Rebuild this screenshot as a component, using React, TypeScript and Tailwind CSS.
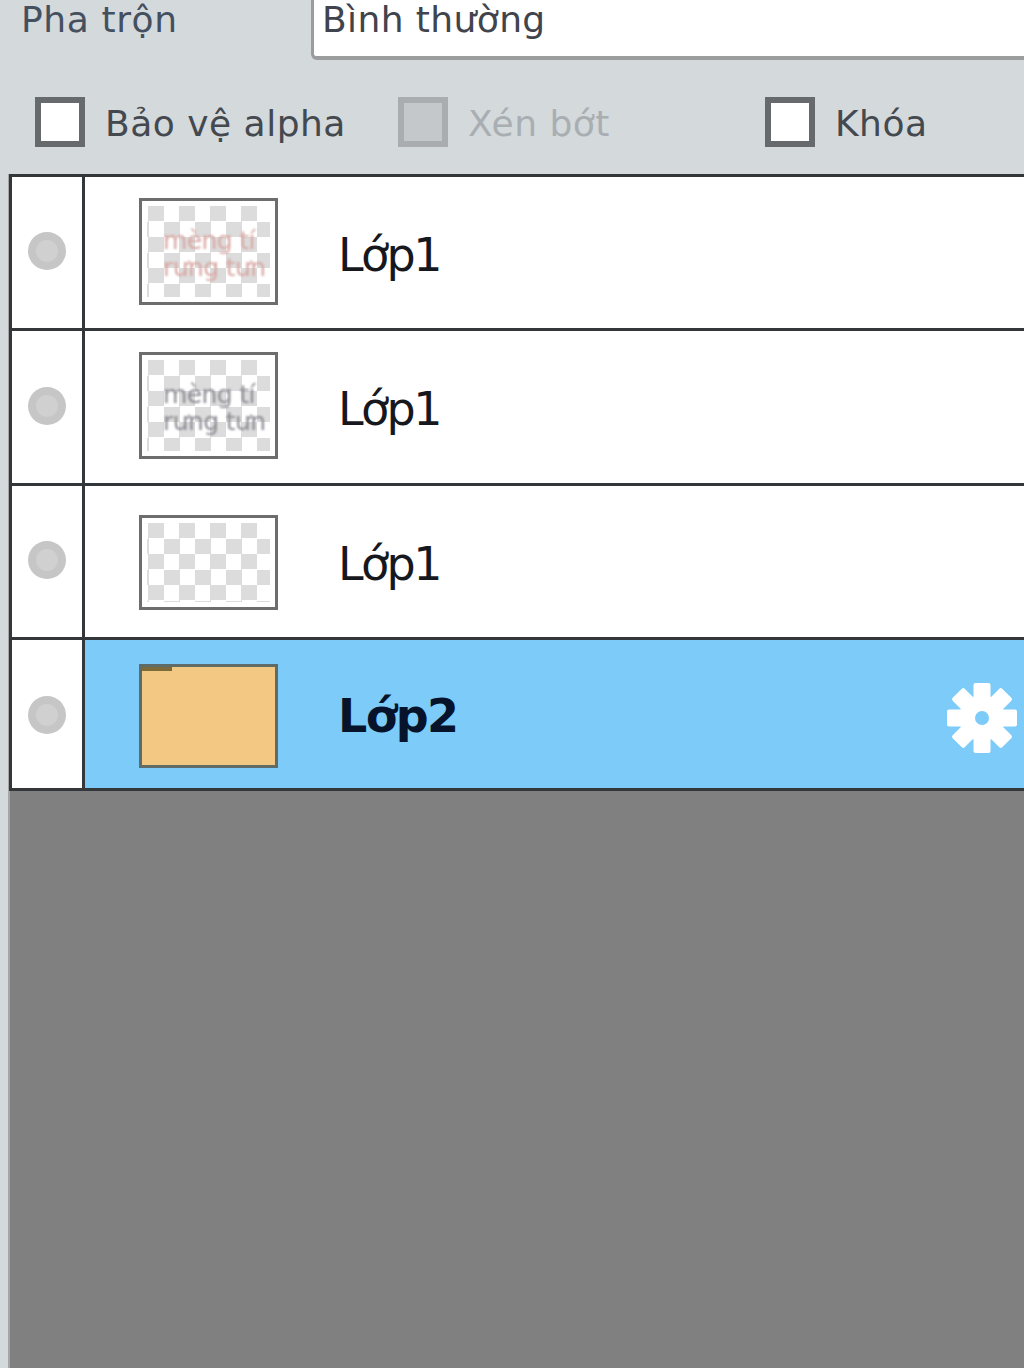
const FONT = "font-['DejaVu_Sans','Noto_Sans',sans-serif]";

const CHECKER =
  'bg-[conic-gradient(#dcdcdc_25%,#ffffff_0_50%,#dcdcdc_0_75%,#ffffff_0)] bg-[length:31px_31px] bg-[position:-14px_0px] blur-[0.5px]';

interface Layer {
  name: string;
  thumb: string;
  doodle?: string[];
  doodleColor?: string;
  active?: boolean;
  rowH: string;
}

const LAYERS: Layer[] = [
  { name: 'Lớp1', thumb: 'h-[107px] mb-[3px]', doodle: ['mèng tí', 'rưng tưn'], doodleColor: 'text-[#d8a8a4]', rowH: 'h-[154px]' },
  { name: 'Lớp1', thumb: 'h-[107px] mb-[3px]', doodle: ['mèng tí', 'rưng tưn'], doodleColor: 'text-[#8c8c94]', rowH: 'h-[155px]' },
  { name: 'Lớp1', thumb: 'h-[95px] mt-[2px]', rowH: 'h-[154px]' },
  { name: 'Lớp2', thumb: 'h-[104px] mt-[4px]', active: true, rowH: 'h-[151px]' },
];

function Checkbox({ label, disabled, box }: { label: string; disabled?: boolean; box: string }) {
  return (
    <div className={`flex items-center ${box}`}>
      <div
        className={`w-[50px] h-[50px] shrink-0 border-[6px] ${
          disabled ? 'border-[#a9adb0] bg-[#c4c8cb]' : 'border-[#666a6d] bg-white'
        }`}
      />
      <span
        className={`ml-[20px] mt-[3px] text-[36px] leading-none tracking-[0.5px] whitespace-nowrap ${
          disabled ? 'text-[#a9aeb2]' : 'text-[#44484f]'
        }`}
      >
        {label}
      </span>
    </div>
  );
}

function Gear() {
  const teeth = [0, 45, 90, 135];
  return (
    <svg width="72" height="72" viewBox="0 0 72 72" className="shrink-0">
      <g fill="#ffffff">
        {teeth.map((a) => (
          <rect key={a} x="27.5" y="1" width="17" height="70" rx="2" transform={`rotate(${a} 36 36)`} />
        ))}
        <circle cx="36" cy="36" r="23" />
      </g>
      <circle cx="36" cy="36" r="7" fill="#7ccbf9" />
    </svg>
  );
}

function LayerRow({ layer }: { layer: Layer }) {
  return (
    <div className={`flex ${layer.rowH} border-b-[3px] border-[#33373a]`}>
      <div className="w-[73px] shrink-0 flex items-center justify-center bg-white border-r-[3px] border-[#33373a]">
        <div
          className={`w-[38px] h-[38px] rounded-full bg-[#c6c6c6] flex items-center justify-center ${
            layer.active ? 'mt-[2px]' : 'mb-[3px]'
          }`}
        >
          <div className="w-[22px] h-[22px] rounded-full bg-[#d0d0d0]" />
        </div>
      </div>
      <div className={`flex-1 flex items-center pl-[54px] pr-[6px] ${layer.active ? 'bg-[#7ccbf9]' : 'bg-white'}`}>
        <div
          className={`relative w-[139px] shrink-0 overflow-hidden border-[3px] ${layer.thumb} ${
            layer.active ? 'border-[#5f6b66] bg-[#f2c883]' : 'border-[#6d6d6d] bg-white p-[5px]'
          }`}
        >
          {!layer.active && <div className={`h-full ${CHECKER}`} />}
          {layer.doodle && (
            <div
              className={`absolute left-[21px] top-[26px] text-[25px] leading-[27px] tracking-[-0.6px] blur-[1px] whitespace-nowrap ${layer.doodleColor}`}
            >
              {layer.doodle.map((line) => (
                <div key={line}>{line}</div>
              ))}
            </div>
          )}
          {layer.active && <div className="absolute left-0 top-0 w-[30px] h-[4px] bg-[#7d6a3a]" />}
        </div>
        <span
          className={`ml-[60px] text-[46px] leading-none mt-[4px] ${
            layer.active ? 'font-bold text-[#06132b] tracking-[-1.6px]' : 'text-[#16181d] tracking-[-2.6px]'
          }`}
        >
          {layer.name}
        </span>
        {layer.active && (
          <div className="ml-auto mt-[8px]">
            <Gear />
          </div>
        )}
      </div>
    </div>
  );
}

export default function App() {
  return (
    <div className={`w-[1024px] h-[1368px] overflow-hidden bg-[#d4d9dc] flex flex-col ${FONT}`}>
      {/* Blend mode */}
      <div className="h-[60px] shrink-0 flex">
        <div className="w-[311px] shrink-0 pl-[21px] text-[36px] leading-[40px] tracking-[0.6px] text-[#44505f]">
          Pha trộn
        </div>
        <div className="flex-1 h-[60px] bg-white border-l-[3px] border-b-[4px] border-[#9a9c9d] rounded-bl-[6px] pl-[8px] text-[36px] leading-[40px] tracking-[0.4px] text-[#3f444d]">
          Bình thường
        </div>
      </div>

      {/* Options */}
      <div className="h-[114px] shrink-0 flex items-center pl-[35px] pt-[10px]">
        <Checkbox label="Bảo vệ alpha" box="w-[363px]" />
        <Checkbox label="Xén bớt" disabled box="w-[367px]" />
        <Checkbox label="Khóa" box="" />
      </div>

      {/* Layers */}
      <div className="flex-1 ml-[8px] flex flex-col bg-[#808080] border-l-[2px] border-[#a4a6a7]">
        <div className="-ml-[1px] border-t-[3px] border-l-[3px] border-[#33373a]">
          {LAYERS.map((layer, i) => (
            <LayerRow key={i} layer={layer} />
          ))}
        </div>
      </div>
    </div>
  );
}
